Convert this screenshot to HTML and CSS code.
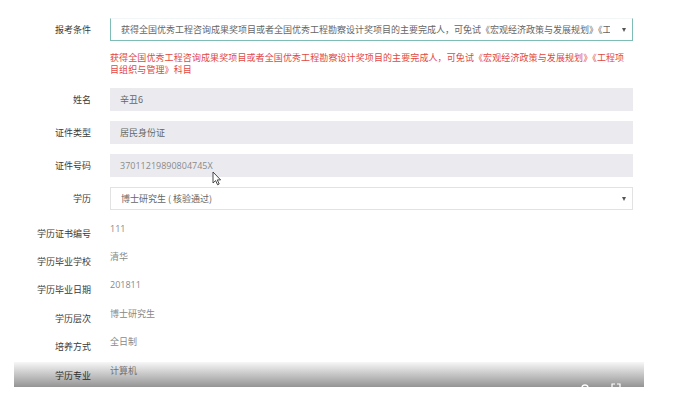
FILE: index.html
```html
<!DOCTYPE html>
<html lang="zh">
<head>
<meta charset="utf-8">
<link rel="stylesheet" href="styles.css">
</head>
<body>
<div class="player">
  <div class="form">
    <div class="row field-row">
      <div class="label">报考条件</div>
      <div class="control select focus"><span class="txt">获得全国优秀工程咨询成果奖项目或者全国优秀工程勘察设计奖项目的主要完成人，可免试《宏观经济政策与发展规划》《工程项目组织与管理》科目</span><span class="caret"></span></div>
    </div>
    <div class="help">获得全国优秀工程咨询成果奖项目或者全国优秀工程勘察设计奖项目的主要完成人，可免试《宏观经济政策与发展规划》《工程项目组织与管理》科目</div>
    <div class="row field-row">
      <div class="label">姓名</div>
      <div class="control readonly">辛丑6</div>
    </div>
    <div class="row field-row">
      <div class="label">证件类型</div>
      <div class="control readonly">居民身份证</div>
    </div>
    <div class="row field-row">
      <div class="label">证件号码</div>
      <div class="control readonly id">37011219890804745X</div>
    </div>
    <div class="row field-row last">
      <div class="label">学历</div>
      <div class="control select"><span class="txt">博士研究生 ( 核验通过)</span><span class="caret"></span></div>
    </div>
    <div class="static">
      <div class="row srow"><div class="label">学历证书编号</div><div class="value num">111</div></div>
      <div class="row srow"><div class="label">学历毕业学校</div><div class="value">清华</div></div>
      <div class="row srow"><div class="label">学历毕业日期</div><div class="value num">201811</div></div>
      <div class="row srow"><div class="label">学历层次</div><div class="value">博士研究生</div></div>
      <div class="row srow"><div class="label">培养方式</div><div class="value">全日制</div></div>
      <div class="row srow"><div class="label">学历专业</div><div class="value">计算机</div></div>
    </div>
  </div>
  <svg class="cursor" width="10" height="15" viewBox="0 0 10 15"><path d="M1 1 L1 12 L3.6 9.6 L5.6 13.8 L7.2 13 L5.3 8.9 L8.6 8.9 Z" fill="#fff" stroke="#333" stroke-width="0.9" stroke-linejoin="round"/></svg>
  <div class="shade"></div>
  <svg class="ico gear" width="10" height="10" viewBox="0 0 10 10"><circle cx="5" cy="5" r="3" fill="none" stroke="#fff" stroke-width="1.4"/></svg>
  <svg class="ico full" width="10" height="10" viewBox="0 0 10 10"><path d="M1 4V1h3M6 1h3v3" fill="none" stroke="#fff" stroke-width="1.2"/></svg>
</div>
</body>
</html>
```
FILE: styles.css
```css
html, body { margin: 0; padding: 0; background: #fff; }
body {
  font-family: "Noto Sans CJK SC", "Open Sans", sans-serif;
  font-size: 9px;
  color: #444;
  width: 678px;
  height: 399px;
  overflow: hidden;
}
.player {
  position: relative;
  margin-left: 14px;
  width: 630px;
  height: 387px;
  overflow: hidden;
  background: #fff;
}
.form { padding-top: 18px; }
.row { display: flex; align-items: center; }
.label {
  width: 77px;
  flex: none;
  text-align: right;
  color: #3a3a3a;
  white-space: nowrap;
}
.field-row { height: 23px; margin-bottom: 10px; }
.field-row.last { margin-bottom: 9px; }
.control {
  margin-left: 19px;
  width: 523px;
  height: 23px;
  box-sizing: border-box;
  display: flex;
  align-items: center;
  padding: 0 10px;
  color: #666;
  white-space: nowrap;
  overflow: hidden;
}
.readonly { background: #ebebef; padding-left: 10px; }
.id { color: #8a8a8a; font-family: "Open Sans", sans-serif; }
.select {
  background: #fff;
  border: 1px solid #e2e2e2;
  position: relative;
  padding-right: 22px;
}
.select .txt { overflow: hidden; flex: 1; }
.focus {
  border-color: #f2f6f6 #7ebdb6 #7ebdb6 #7ebdb6;
}
.caret {
  position: absolute;
  right: 6px;
  top: 50%;
  margin-top: -2px;
  width: 0; height: 0;
  border-left: 2.5px solid transparent;
  border-right: 2.5px solid transparent;
  border-top: 4px solid #555;
}
.help {
  margin: 11px 0 12px 96px;
  width: 516px;
  letter-spacing: 0.1px;
  color: #e2473f;
  line-height: 12px;
}
.srow { height: 28.4px; align-items: center; }
.value {
  margin-left: 19px;
  color: #888;
  position: relative;
  top: -5px;
}
.num { font-family: "Open Sans", sans-serif; }
.cursor { position: absolute; left: 198px; top: 171px; }
.shade {
  position: absolute;
  left: 0; right: 0;
  top: 362px;
  height: 25px;
  background: linear-gradient(to bottom, rgba(0,0,0,0.03), rgba(0,0,0,0.42));
}
.ico { position: absolute; top: 383px; }
.gear { left: 566px; }
.full { left: 597px; }
```
